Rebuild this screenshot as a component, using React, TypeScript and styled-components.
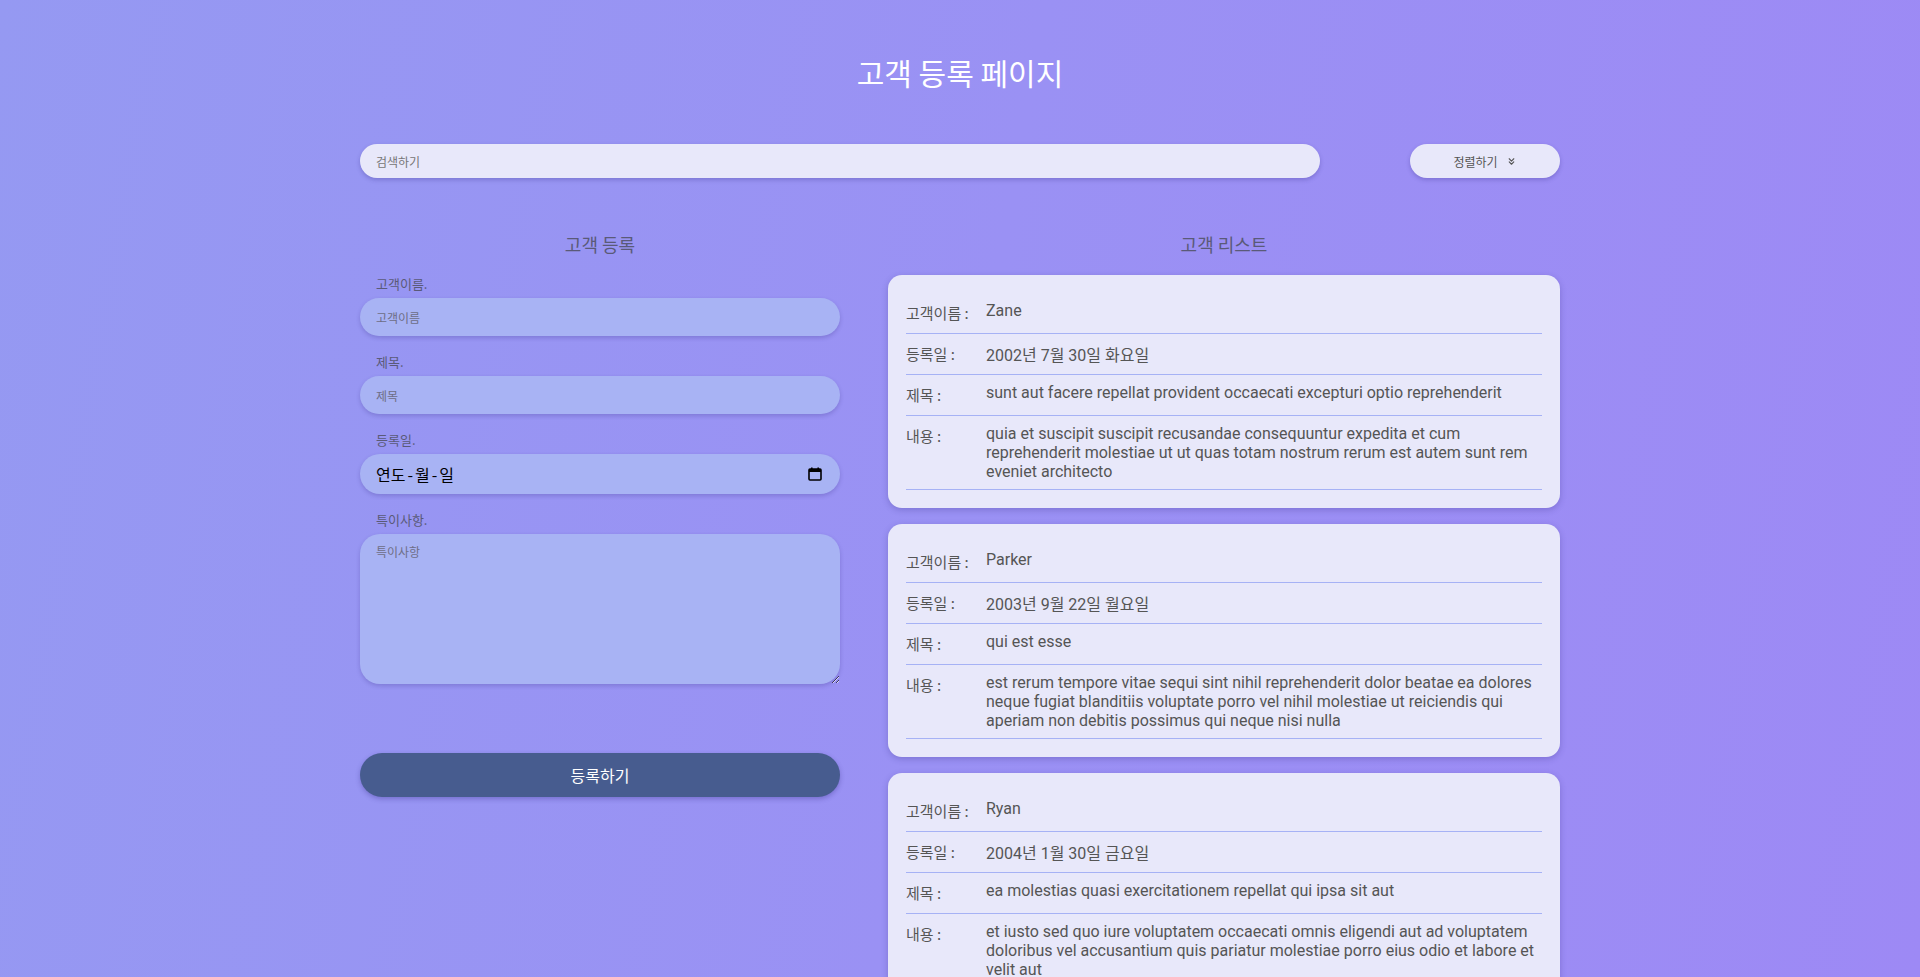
import styled, { createGlobalStyle } from 'styled-components';
import { ChevronsDown } from 'lucide-react';

const customers = [
  {
    name: 'Zane',
    date: '2002년 7월 30일 화요일',
    title: 'sunt aut facere repellat provident occaecati excepturi optio reprehenderit',
    body: 'quia et suscipit suscipit recusandae consequuntur expedita et cum reprehenderit molestiae ut ut quas totam nostrum rerum est autem sunt rem eveniet architecto',
  },
  {
    name: 'Parker',
    date: '2003년 9월 22일 월요일',
    title: 'qui est esse',
    body: 'est rerum tempore vitae sequi sint nihil reprehenderit dolor beatae ea dolores neque fugiat blanditiis voluptate porro vel nihil molestiae ut reiciendis qui aperiam non debitis possimus qui neque nisi nulla',
  },
  {
    name: 'Ryan',
    date: '2004년 1월 30일 금요일',
    title: 'ea molestias quasi exercitationem repellat qui ipsa sit aut',
    body: 'et iusto sed quo iure voluptatem occaecati omnis eligendi aut ad voluptatem doloribus vel accusantium quis pariatur molestiae porro eius odio et labore et velit aut',
  },
  {
    name: 'Mia',
    date: '2005년 3월 14일 월요일',
    title: 'eum et est occaecati',
    body: 'ullam et saepe reiciendis voluptatem adipisci sit amet autem assumenda provident rerum culpa quis hic commodi nesciunt rem tenetur doloremque ipsam iure quis sunt voluptatem rerum illo velit',
  },
];

function App() {
  return (
    <>
      <GlobalStyle />
      <Page>
        <Title>고객 등록 페이지</Title>
        <Toolbar>
          <SearchInput placeholder='검색하기' />
          <SortButton>
            정렬하기 <ChevronsDown size={11} strokeWidth={2.4} />
          </SortButton>
        </Toolbar>

        <Columns>
          <section>
            <Heading>고객 등록</Heading>
            <Form onSubmit={(e) => e.preventDefault()}>
              <Field>
                <Label>고객이름.</Label>
                <Input placeholder='고객이름' />
              </Field>
              <Field>
                <Label>제목.</Label>
                <Input placeholder='제목' />
              </Field>
              <Field>
                <Label>등록일.</Label>
                <DateBox>
                  <DateText>
                    <span>연도</span>
                    <Dash>-</Dash>
                    <span>월</span>
                    <Dash>-</Dash>
                    <span>일</span>
                  </DateText>
                  <svg width='14' height='14' viewBox='0 0 14 14'>
                    <rect x='1' y='2' width='12' height='11' rx='1' fill='none' stroke='#000' strokeWidth='1.6' />
                    <rect x='1' y='2' width='12' height='3' fill='#000' />
                    <rect x='3' y='0.5' width='1.6' height='2.5' fill='#000' />
                    <rect x='9.4' y='0.5' width='1.6' height='2.5' fill='#000' />
                  </svg>
                </DateBox>
              </Field>
              <Field>
                <Label>특이사항.</Label>
                <TextArea placeholder='특이사항' />
              </Field>
              <SubmitButton type='submit'>등록하기</SubmitButton>
            </Form>
          </section>

          <section>
            <Heading>고객 리스트</Heading>
            <CardList>
              {customers.map((c) => (
                <Card key={c.name}>
                  <Row>
                    <RowLabel>고객이름 :</RowLabel>
                    <RowValue>{c.name}</RowValue>
                  </Row>
                  <Row>
                    <RowLabel>등록일 :</RowLabel>
                    <RowValue>{c.date}</RowValue>
                  </Row>
                  <Row>
                    <RowLabel>제목 :</RowLabel>
                    <RowValue>{c.title}</RowValue>
                  </Row>
                  <Row>
                    <RowLabel>내용 :</RowLabel>
                    <RowValue>{c.body}</RowValue>
                  </Row>
                </Card>
              ))}
            </CardList>
          </section>
        </Columns>
      </Page>
    </>
  );
}

const GlobalStyle = createGlobalStyle`
  * {
    box-sizing: border-box;
  }
  body {
    margin: 0;
    font-family: Roboto, 'Noto Sans CJK KR', sans-serif;
    background: linear-gradient(100deg, #9599f2 0%, #9a91f4 50%, #9d89f5 100%) fixed;
    min-height: 100vh;
  }
`;

const Page = styled.main`
  width: 1200px;
  margin: 0 auto;
  padding: 52px 0 40px;
`;

const Title = styled.h1`
  margin: 0;
  text-align: center;
  color: #fff;
  font-family: 'Noto Sans CJK KR', sans-serif;
  font-size: 30px;
  font-weight: 400;
  line-height: 40px;
`;

const Toolbar = styled.div`
  margin-top: 52px;
  display: flex;
  justify-content: space-between;
  align-items: center;
`;

const SearchInput = styled.input`
  width: 960px;
  height: 34px;
  border: 0;
  border-radius: 17px;
  padding: 0 16px;
  background: #e8e8fa;
  box-shadow: 0 2px 4px rgba(40, 30, 120, 0.25);
  font-family: 'Noto Sans CJK KR', sans-serif;
  font-size: 12px;
  color: #333;
  outline: none;

  &::placeholder {
    color: #767676;
  }
`;

const SortButton = styled.button`
  width: 150px;
  height: 34px;
  border: 0;
  border-radius: 17px;
  background: #e8e8fa;
  box-shadow: 0 2px 4px rgba(40, 30, 120, 0.25);
  display: flex;
  justify-content: center;
  align-items: center;
  gap: 8px;
  font-family: 'Noto Sans CJK KR', sans-serif;
  font-size: 12px;
  color: #555;
  cursor: pointer;
`;

const Columns = styled.div`
  margin-top: 53px;
  display: grid;
  grid-template-columns: 480px 672px;
  justify-content: space-between;
  align-items: start;
`;

const Heading = styled.h2`
  margin: 0 0 18px;
  text-align: center;
  font-family: 'Noto Sans CJK KR', sans-serif;
  font-size: 18px;
  font-weight: 400;
  line-height: 26px;
  color: #5a5a78;
`;

const Form = styled.form`
  display: flex;
  flex-direction: column;
  gap: 17px;
  margin-top: 3px;
`;

const Field = styled.label`
  display: flex;
  flex-direction: column;
  gap: 5px;
`;

const Label = styled.span`
  padding-left: 16px;
  font-family: 'Noto Sans CJK KR', sans-serif;
  font-size: 13px;
  line-height: 18px;
  color: #5a5a78;
`;

const fieldBox = `
  width: 100%;
  border: 0;
  background: #a8b3f4;
  box-shadow: 0 2px 4px rgba(40, 30, 120, 0.22);
  font-family: 'Noto Sans CJK KR', sans-serif;
  outline: none;
`;

const Input = styled.input`
  ${fieldBox}
  height: 38px;
  border-radius: 19px;
  padding: 0 16px;
  font-size: 12px;

  &::placeholder {
    color: #6e6e86;
  }
`;

const DateBox = styled.div`
  ${fieldBox}
  height: 40px;
  border-radius: 20px;
  padding: 0 18px 0 16px;
  display: flex;
  justify-content: space-between;
  align-items: center;
  font-size: 16px;
  font-weight: 400;
  color: #000;
`;

const DateText = styled.span`
  display: flex;
  align-items: center;
`;

const Dash = styled.span`
  margin: 0 2px;
`;

const TextArea = styled.textarea`
  ${fieldBox}
  height: 150px;
  border-radius: 20px;
  padding: 9px 16px;
  font-size: 12px;
  resize: vertical;

  &::placeholder {
    color: #6e6e86;
  }
`;

const SubmitButton = styled.button`
  margin-top: 52px;
  height: 44px;
  border: 0;
  border-radius: 22px;
  background: #475c8f;
  box-shadow: 0 2px 5px rgba(40, 30, 120, 0.3);
  color: #fff;
  font-family: 'Noto Sans CJK KR', sans-serif;
  font-size: 16px;
  cursor: pointer;
`;

const CardList = styled.div`
  display: flex;
  flex-direction: column;
  gap: 16px;
`;

const Card = styled.article`
  background: #e8e8fa;
  border-radius: 14px;
  padding: 18px;
  box-shadow: 0 2px 6px rgba(40, 30, 120, 0.25);
`;

const Row = styled.div`
  display: flex;
  align-items: flex-start;
  padding: 8px 0;
  border-bottom: 1px solid #a6b2f5;
`;

const RowLabel = styled.span`
  flex: 0 0 80px;
  font-family: 'Noto Sans CJK KR', sans-serif;
  font-size: 15px;
  line-height: 24px;
  color: #555;
`;

const RowValue = styled.span`
  flex: 1;
  font-family: Roboto, 'Noto Sans CJK KR', sans-serif;
  font-size: 16px;
  line-height: normal;
  color: #555;
`;

export default App;
